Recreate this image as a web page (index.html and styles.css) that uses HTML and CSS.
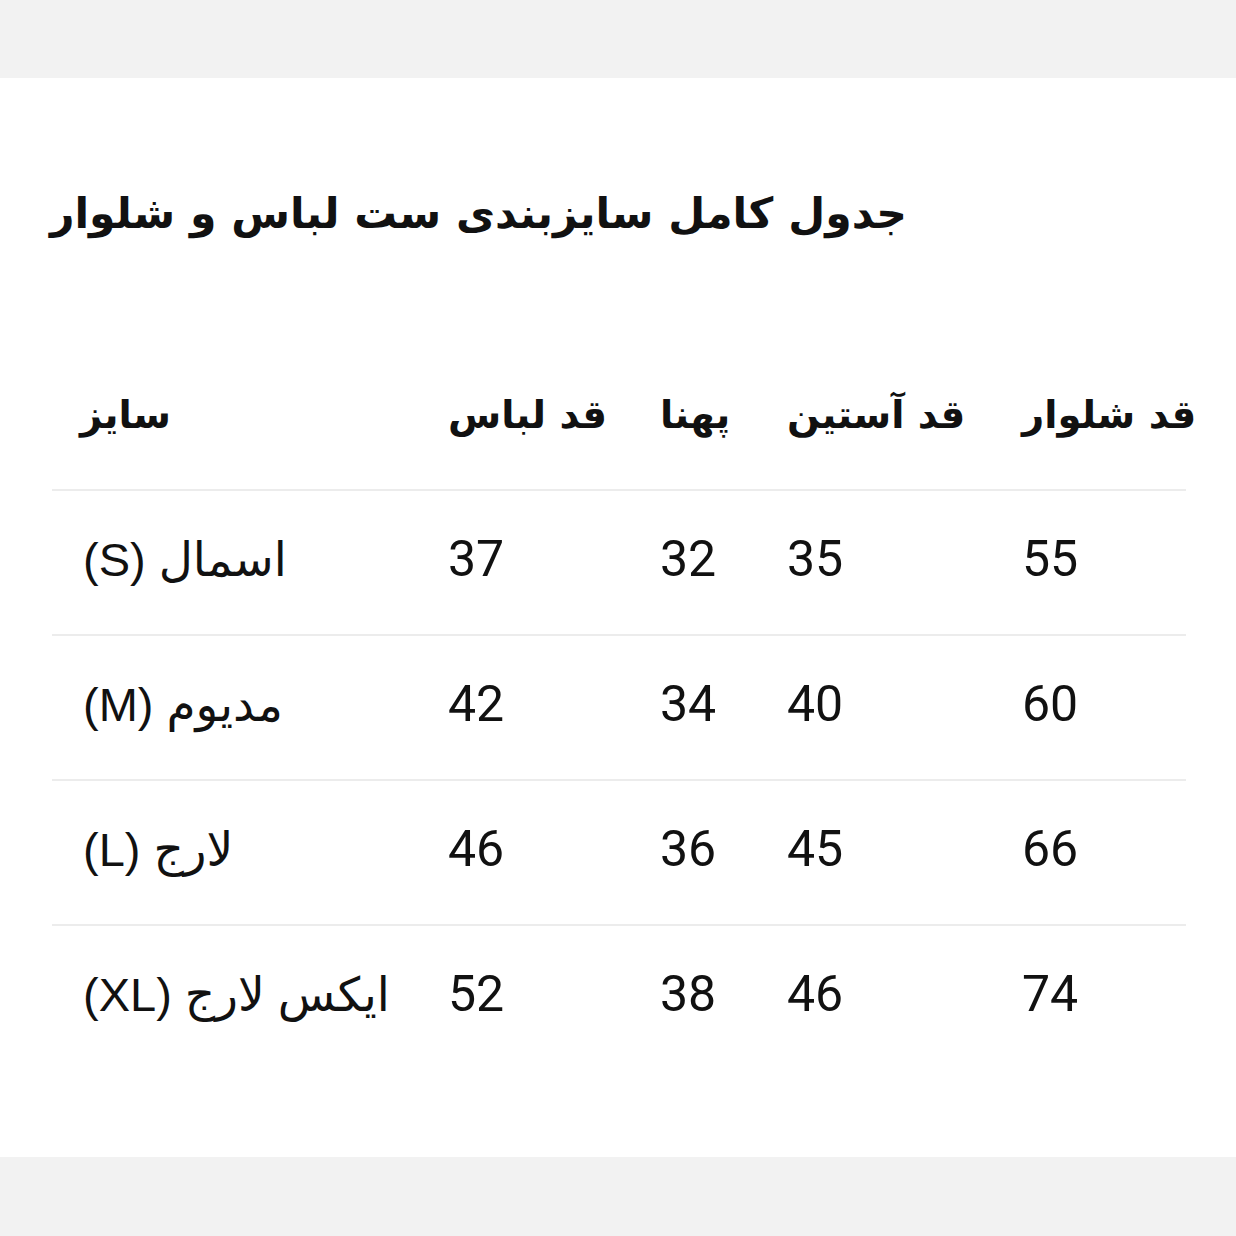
FILE: index.html
```html
<!DOCTYPE html>
<html lang="fa">
<head>
<meta charset="utf-8">
<title>جدول سایزبندی</title>
<link rel="stylesheet" href="styles.css">
</head>
<body>
<div class="band band-top"></div>
<main class="card">
  <h1 class="title">جدول کامل سایزبندی ست لباس و شلوار</h1>
  <div class="table">
    <div class="row head">
      <div class="cell">سایز</div>
      <div class="cell">قد لباس</div>
      <div class="cell">پهنا</div>
      <div class="cell">قد آستین</div>
      <div class="cell">قد شلوار</div>
    </div>
    <div class="row">
      <div class="cell label">(S) اسمال</div>
      <div class="cell num">37</div>
      <div class="cell num">32</div>
      <div class="cell num">35</div>
      <div class="cell num">55</div>
    </div>
    <div class="row">
      <div class="cell label">(M) مدیوم</div>
      <div class="cell num">42</div>
      <div class="cell num">34</div>
      <div class="cell num">40</div>
      <div class="cell num">60</div>
    </div>
    <div class="row">
      <div class="cell label">(L) لارج</div>
      <div class="cell num">46</div>
      <div class="cell num">36</div>
      <div class="cell num">45</div>
      <div class="cell num">66</div>
    </div>
    <div class="row last">
      <div class="cell label">(XL) ایکس لارج</div>
      <div class="cell num">52</div>
      <div class="cell num">38</div>
      <div class="cell num">46</div>
      <div class="cell num">74</div>
    </div>
  </div>
</main>
<div class="band band-bottom"></div>
</body>
</html>
```
FILE: styles.css
```css
html, body {
  margin: 0;
  padding: 0;
  background: #f2f2f2;
}
body {
  width: 1236px;
  height: 1236px;
  overflow: hidden;
  font-family: "DejaVu Sans", sans-serif;
  color: #111;
}
.band-top {
  height: 78px;
  background: #f2f2f2;
}
.band-bottom {
  height: 79px;
  background: #f2f2f2;
}
.card {
  background: #fff;
  height: 1079px;
  box-sizing: border-box;
  padding-top: 100px;
}
.title {
  margin: 0;
  padding-left: 50px;
  direction: rtl;
  text-align: left;
  font-family: "DejaVu Sans", sans-serif;
  font-weight: bold;
  font-size: 42.6px;
  line-height: 70px;
  height: 70px;
  display: flex;
  justify-content: flex-end;
}
.table {
  margin-left: 52px;
  width: 1134px;
  margin-top: 92px;
}
.row {
  display: grid;
  grid-template-columns: 368px 212px 127px 235px 192px;
  align-items: center;
  height: 143px;
  border-bottom: 2px solid #ececec;
}
.row.head {
  height: 149px;
}
.row.last {
  border-bottom: none;
}
.cell {
  padding-left: 28px;
  white-space: nowrap;
  text-align: left;
}
.head .cell {
  font-family: "DejaVu Sans", sans-serif;
  font-weight: bold;
  font-size: 38.6px;
}
.label {
  font-family: "Liberation Sans", "DejaVu Sans", sans-serif;
  font-size: 47px;
  padding-left: 31px;
  padding-bottom: 6px;
}
.num {
  font-family: Roboto, sans-serif;
  font-size: 50px;
  padding-bottom: 8px;
}
```
